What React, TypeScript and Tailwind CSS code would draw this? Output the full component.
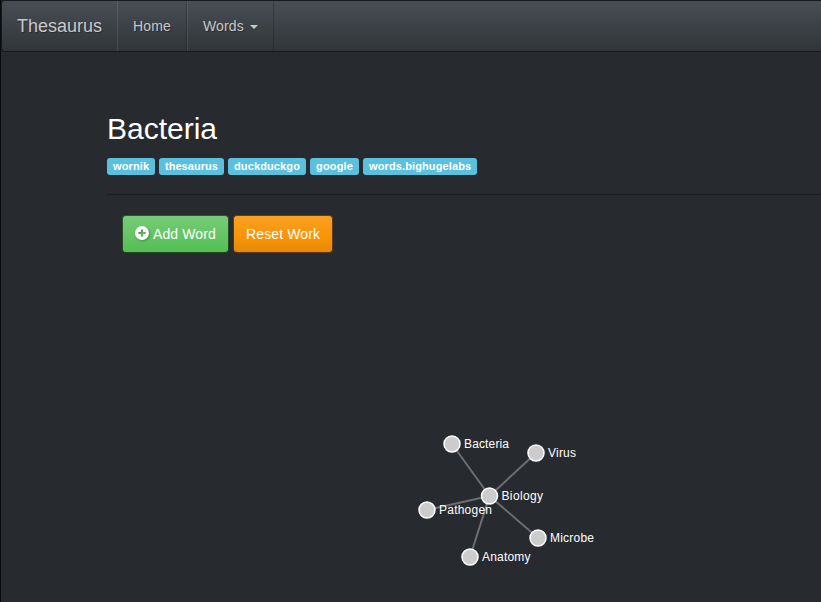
import React from "react";

const SOURCES = [
  { name: "wornik", style: "w-12 tracking-[0.12px]" },
  { name: "thesaurus", style: "w-[65px] tracking-[0.04px]" },
  { name: "duckduckgo", style: "w-[78px] tracking-[0.12px]" },
  { name: "google", style: "w-[49px] tracking-[0.17px]" },
  { name: "words.bighugelabs", style: "w-[114px] tracking-[0.12px]" },
];

const HUB = { name: "Biology", x: 489.5, y: 496, length: 41.5 };
const WORDS = [
  { name: "Bacteria", x: 452, y: 444, length: 45 },
  { name: "Virus", x: 536, y: 453, length: 28 },
  { name: "Pathogen", x: 427, y: 510, length: 53 },
  { name: "Microbe", x: 538, y: 538, length: 44 },
  { name: "Anatomy", x: 470, y: 557, length: 48.5 },
];

function Navbar() {
  return (
    <nav className="flex h-[52px] rounded-l border border-r-0 border-[#17191c] bg-[linear-gradient(#484e55,#3a3f44_60%,#313539)] text-sm leading-5 text-[#c8c8c8] [text-shadow:1px_1px_1px_rgba(0,0,0,0.3)]">
      <a className="w-[115px] pl-[15px] pt-[15px] text-lg leading-5">Thesaurus</a>
      <a className="w-[70px] border-l border-r border-l-white/10 border-r-black/20 pl-[15px] pt-[15px] tracking-[0.12px]">Home</a>
      <a className="flex w-[87px] items-start border-l border-r border-l-white/10 border-r-black/20 pl-[15px] pt-[15px] tracking-[0.12px]">
        Words
        <span className="ml-[6px] mt-[9px] border-x-4 border-t-4 border-x-transparent border-t-[#c8c8c8]" />
      </a>
    </nav>
  );
}

function AddIcon() {
  return (
    <svg className="mr-1 mt-[2px] h-[14px] w-[14px] overflow-visible drop-shadow-[1px_1px_1px_rgba(0,0,0,0.3)]" viewBox="0 0 14 14">
      <path
        fill="white"
        fillRule="evenodd"
        d="M7 0a7 7 0 1 0 0 14A7 7 0 0 0 7 0ZM5.9 3.4h2.2v2.5h2.5v2.2H8.1v2.5H5.9V8.1H3.4V5.9h2.5Z"
      />
    </svg>
  );
}

function WordGraph() {
  return (
    <svg className="block h-[350px] w-[821px]" viewBox="0 252 821 350">
      {WORDS.map((w) => (
        <line key={w.name} x1={HUB.x} y1={HUB.y} x2={w.x} y2={w.y} stroke="#999" strokeOpacity="0.6" strokeWidth="2" />
      ))}
      {[...WORDS, HUB].map((w) => (
        <g key={w.name}>
          <circle cx={w.x} cy={w.y} r="8" fill="#ccc" stroke="#fff" strokeWidth="1.5" />
          <text x={w.x + 12} y={w.y + 4} fill="#fff" fontSize="12" textLength={w.length}>
            {w.name}
          </text>
        </g>
      ))}
    </svg>
  );
}

export default function App() {
  return (
    <div className="h-[602px] w-[821px] overflow-hidden border-l border-[#080c0d] bg-[#272b30] font-['Liberation_Sans',Arial,sans-serif] text-white">
      <Navbar />
      <main>
        <div className="ml-[106px] pt-[60px]">
          <h2 className="text-[30px] leading-[33px]">Bacteria</h2>
          <div className="mt-[13px] flex gap-1">
            {SOURCES.map((s) => (
              <span
                key={s.name}
                className={`h-[17px] whitespace-nowrap rounded-[3px] bg-[#5bc0de] pl-[6px] text-[11px] font-bold leading-[17px] ${s.style}`}
              >
                {s.name}
              </span>
            ))}
          </div>
          <hr className="mt-[19px] border-t border-[#1c1e22]" />
          <div className="ml-[15px] mt-5 flex h-[38px] gap-1 text-sm leading-5 [text-shadow:1px_1px_1px_rgba(0,0,0,0.3)]">
            <button className="flex h-[38px] w-[107px] rounded border border-black/60 bg-[linear-gradient(#78cc78,#62c462_60%,#53be53)] bg-origin-border pl-3 pt-2 tracking-[0.12px]">
              <AddIcon />
              Add Word
            </button>
            <button className="flex h-[38px] w-[100px] rounded border border-black/60 bg-[linear-gradient(#faa123,#f89406_60%,#e48806)] bg-origin-border pl-3 pt-2 tracking-[0.12px]">
              Reset Work
            </button>
          </div>
        </div>
        <div className="-ml-px -mt-px">
          <WordGraph />
        </div>
      </main>
    </div>
  );
}
